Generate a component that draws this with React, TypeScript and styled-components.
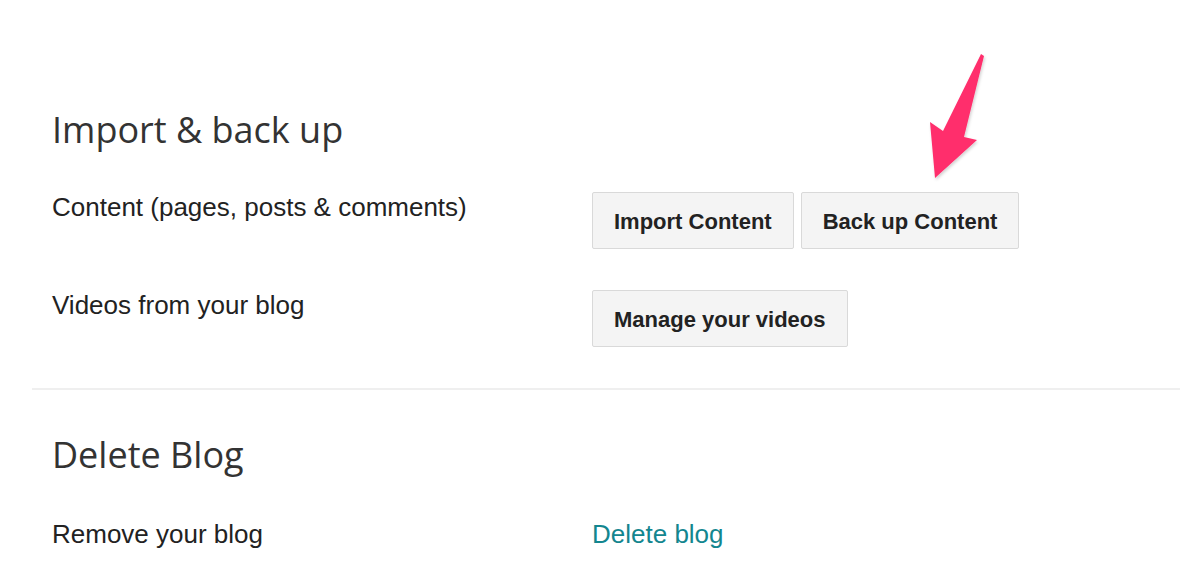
import React from "react";
import styled, { createGlobalStyle } from "styled-components";

const Global = createGlobalStyle`
  html, body { margin: 0; padding: 0; background: #ffffff; }
  body { font-family: "Liberation Sans", Arial, sans-serif; color: #222; }
`;

const Page = styled.div`
  position: relative;
  width: 1180px;
  height: 576px;
  overflow: hidden;
  padding-top: 106px;
  box-sizing: border-box;
`;

const Section = styled.section<{ $bottom?: number }>`
  padding: 0 0 ${(p) => p.$bottom ?? 0}px 52px;
`;

const Heading = styled.h2<{ $gap?: number }>`
  margin: 0 0 ${(p) => p.$gap ?? 38}px 0;
  font-family: "Open Sans", sans-serif;
  font-weight: 400;
  font-size: 36px;
  line-height: 48px;
  color: #333;
`;

const Rows = styled.div`
  display: grid;
  grid-template-columns: 540px 1fr;
  row-gap: 41px;
  align-items: start;
`;

const Label = styled.div`
  font-size: 26px;
  line-height: 30px;
  color: #222;
`;

const Actions = styled.div`
  display: flex;
  gap: 7px;
`;

const Button = styled.button`
  height: 57px;
  padding: 3px 21px 0;
  border: 1px solid #d9d9d9;
  border-radius: 2px;
  background: #f4f4f4;
  font-family: "Liberation Sans", Arial, sans-serif;
  font-weight: 700;
  font-size: 22px;
  color: #222;
  cursor: pointer;
`;

const Divider = styled.hr`
  margin: 0 0 41px 32px;
  border: 0;
  height: 2px;
  background: #efefef;
`;

const Link = styled.a`
  font-size: 26px;
  line-height: 30px;
  color: #13868f;
  text-decoration: none;
  display: inline-block;
`;

const Arrow = styled.svg`
  position: absolute;
  left: 0;
  top: 0;
  pointer-events: none;
`;

export default function App() {
  return (
    <>
      <Global />
      <Page>
        <Section $bottom={41}>
          <Heading>Import &amp; back up</Heading>
          <Rows>
            <Label>Content (pages, posts &amp; comments)</Label>
            <Actions>
              <Button>Import Content</Button>
              <Button>Back up Content</Button>
            </Actions>
            <Label>Videos from your blog</Label>
            <Actions>
              <Button>Manage your videos</Button>
            </Actions>
          </Rows>
        </Section>
        <Divider />
        <Section>
          <Heading $gap={40}>Delete Blog</Heading>
          <Rows>
            <Label>Remove your blog</Label>
            <div>
              <Link href="#">Delete blog</Link>
            </div>
          </Rows>
        </Section>
        <Arrow width="1180" height="576" viewBox="0 0 1180 576">
          <defs>
            <filter id="sh" x="-20%" y="-20%" width="140%" height="140%">
              <feDropShadow dx="1" dy="2" stdDeviation="1.5" floodColor="#000" floodOpacity="0.18" />
            </filter>
          </defs>
          <polygon
            points="981,54 984,56 964,137 977,140 935,178 930,122 943,131"
            fill="#ff2e6c"
            filter="url(#sh)"
          />
        </Arrow>
      </Page>
    </>
  );
}
